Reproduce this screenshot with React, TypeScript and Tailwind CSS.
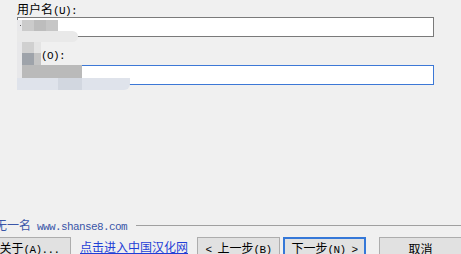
import React from "react";

const cjk = '"Noto Sans CJK SC", "Noto Sans", sans-serif';

// half-width latin glyphs in the dialog are 6px wide, like SimSun
const M = ({ children }: { children: React.ReactNode }) => (
  <span className="font-['Liberation_Mono',monospace] text-[11px] tracking-[-0.6px] whitespace-pre">
    {children}
  </span>
);

const Btn = ({
  children,
  primary,
  className = "",
}: {
  children: React.ReactNode;
  primary?: boolean;
  className?: string;
}) => (
  <div
    className={`h-[23px] w-[83px] shrink-0 flex items-center justify-center bg-[#e1e1e1] text-[12px] text-black leading-none whitespace-nowrap ${
      primary ? "border-2 border-[#3578d8]" : "border border-[#adadad]"
    } ${className}`}
  >
    <span>{children}</span>
  </div>
);

export default function App() {
  return (
    <div
      className="relative w-[461px] h-[254px] overflow-hidden bg-[#f0f0f0] text-black"
      style={{ fontFamily: cjk }}
    >
      <div className="pl-[17px] pt-[2px]">
        <div className="h-[13px] text-[12px] leading-[13px]">
          用户名<M>(U):</M>
        </div>
        <div className="mt-[2px] h-[20px] w-[417px] border border-[#7a7a7a] bg-white" />
        <div className="mt-[10px] h-[13px] text-[12px] leading-[13px]">
          口令<M>(O):</M>
        </div>
        <div className="mt-[5px] h-[20px] w-[417px] border border-[#3c78d6] bg-white" />
      </div>

      {/* bottom strip */}
      <div className="mt-[134px] flex h-[13px] items-center">
        <div className="ml-[-5px] whitespace-nowrap text-[12px] leading-[13px] text-[#3a56a8]">
          无一名<M> www.shanse8.com</M>
        </div>
        <div className="ml-[9px] h-px flex-1 bg-[#a0a0a0]" />
      </div>

      <div className="mt-[5px] flex items-start">
        <Btn className="ml-[-12px]">
          关于<M>(A)...</M>
        </Btn>
        <a className="ml-[9px] mt-[3px] text-[12px] leading-[14px] text-[#1f3fd6] underline whitespace-nowrap">
          点击进入中国汉化网
        </a>
        <Btn className="ml-[9px]">
          <M>&lt; </M>上一步<M>(B)</M>
        </Btn>
        <Btn primary className="ml-[3px]">
          下一步<M>(N) &gt;</M>
        </Btn>
        <Btn className="ml-[13px]">取消</Btn>
      </div>

      {/* mosaic blur over the redacted part */}
      <div className="absolute left-0 top-0 pointer-events-none">
        <div className="absolute left-[17px] top-[20px] h-[70px] w-[5px] bg-[#e8e8ea]" />
        <div className="absolute left-[20px] top-[25px] h-px w-px bg-[#606060]" />
        <div className="absolute left-[22px] top-[20px] h-[11px] w-[12px] bg-[#cbcbcb]" />
        <div className="absolute left-[34px] top-[20px] h-[11px] w-[12px] bg-[#bdbdbd]" />
        <div className="absolute left-[46px] top-[20px] h-[11px] w-[12px] bg-[#c6c6c6]" />
        <div className="absolute left-[17px] top-[31px] h-[11px] w-[61px] rounded-r-[6px] bg-[#e9e9e9]" />
        <div className="absolute left-[22px] top-[42px] h-[11px] w-[12px] bg-[#d0d0d0]" />
        <div className="absolute left-[34px] top-[42px] h-[23px] w-[7px] bg-[#e4e4e4]" />
        <div className="absolute left-[22px] top-[53px] h-[12px] w-[12px] bg-[#9ea3aa]" />
        <div className="absolute left-[34px] top-[53px] h-[12px] w-[7px] bg-[#c4c4c4]" />
        <div className="absolute left-[22px] top-[65px] h-[13px] w-[60px] bg-[#bababa]" />
        <div className="absolute left-[17px] top-[78px] h-[12px] w-[113px] rounded-br-[6px] bg-[#dfe3eb]" />
        <div className="absolute left-[58px] top-[78px] h-[12px] w-[24px] bg-[#d2d7e0]" />
      </div>
    </div>
  );
}
